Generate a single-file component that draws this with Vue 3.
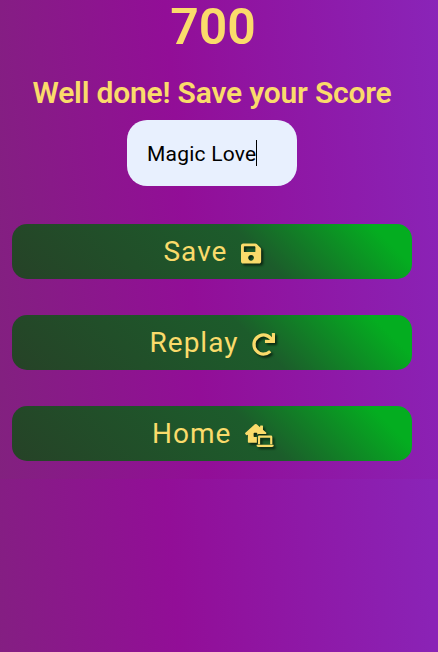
<script setup>
import { ref } from 'vue'

const name = ref('Magic Love')
const actions = [
  {
    label: 'Save', key: 'save', box: '0 0 448 512',
    d: 'M433.941 129.941l-83.882-83.882A48 48 0 0 0 316.118 32H48C21.49 32 0 53.49 0 80v352c0 26.51 21.49 48 48 48h352c26.51 0 48-21.49 48-48V163.882a48 48 0 0 0-14.059-33.941zM224 416c-35.346 0-64-28.654-64-64 0-35.346 28.654-64 64-64s64 28.654 64 64c0 35.346-28.654 64-64 64zm96-304.52V212c0 6.627-5.373 12-12 12H76c-6.627 0-12-5.373-12-12V108c0-6.627 5.373-12 12-12h228.52c3.183 0 6.235 1.264 8.485 3.515l3.48 3.48A11.996 11.996 0 0 1 320 111.48z'
  },
  {
    label: 'Replay', key: 'replay', box: '0 0 512 512',
    d: 'M500.33 0h-47.41a12 12 0 0 0-12 12.57l4 82.76A247.42 247.42 0 0 0 256 8C119.34 8 7.9 119.53 8 256.19 8.1 393.07 119.1 504 256 504a247.1 247.1 0 0 0 166.18-63.91 12 12 0 0 0 .48-17.43l-34-34a12 12 0 0 0-16.38-.55A176 176 0 1 1 402.1 157.8l-101.53-4.87a12 12 0 0 0-12.57 12v47.41a12 12 0 0 0 12 12h200.33a12 12 0 0 0 12-12V12a12 12 0 0 0-12-12z'
  },
  {
    label: 'Home', key: 'home', box: '0 0 640 512',
    d: 'M219 8Q240 -8 261 8L336 72V44Q336 32 348 32H388Q400 32 400 44V130L470 190Q484 208 464 224H304Q288 224 272 240V208Q272 192 256 192H208Q192 192 192 208V272Q192 288 208 288H264V416H80Q64 416 64 400V240L50 247Q36 254 26 243L6 220Q-5 207 9 193ZM288 448V288Q288 256 320 256H576Q608 256 608 288V448H560V304H336V448ZM264 464H632Q640 464 640 472Q640 512 600 512H296Q256 512 256 472Q256 464 264 464Z'
  }
]
</script>

<template>
  <main class="page">
    <div class="score">700</div>
    <h1 class="title">Well done! Save your Score</h1>
    <div class="field"><span class="value">{{ name }}</span><span class="caret"></span></div>
    <div class="actions">
      <button v-for="a in actions" :key="a.key" class="btn" :class="a.key">
        <span class="label">{{ a.label }}</span>
        <svg class="icon" :viewBox="a.box"><path fill-rule="evenodd" :d="a.d" /></svg>
      </button>
    </div>
  </main>
</template>

<style>
body {
  background: linear-gradient(85deg, #82217f 0%, #920e97 43%, #8a24b8 100%) 0 0 / 100% 479px repeat;
  height: 652px;
  overflow: hidden;
}
</style>

<style scoped>
.page {
  width: 424px;
  display: flex;
  flex-direction: column;
  align-items: center;
  font-family: Roboto, sans-serif;
  color: #fadb6b;
}
.score {
  height: 54px;
  line-height: 54px;
  font-size: 50px;
  font-weight: 600;
  margin-left: 2px;
}
.title {
  margin: 18px 0 0;
  height: 40px;
  line-height: 41px;
  font-size: 30px;
  font-weight: 600;
  letter-spacing: -0.2px;
  white-space: nowrap;
}
.field {
  box-sizing: border-box;
  width: 170px;
  height: 66px;
  margin-top: 8px;
  padding-left: 20px;
  display: flex;
  align-items: center;
  border-radius: 20px;
  background: #e8f0fe;
  color: #000;
  font-size: 21px;
}
.value {
  padding-top: 2px;
  letter-spacing: 0.23px;
  white-space: nowrap;
}
.caret {
  width: 1px;
  height: 26px;
  background: #000;
}
.actions {
  width: 400px;
  margin-top: 38px;
  display: grid;
  gap: 36px;
}
.btn {
  height: 55px;
  border: 0;
  padding: 0 0 0 1px;
  border-radius: 15px;
  background: linear-gradient(45deg, #264227 0%, #1c5c2b 60%, #04ad20 91%);
  display: flex;
  align-items: center;
  justify-content: center;
  gap: 14px;
  font-family: inherit;
  font-size: 28px;
  color: inherit;
}
.btn.home {
  padding-left: 2px;
}
.label {
  padding-top: 1px;
  line-height: 54px;
  letter-spacing: 1px;
}
.icon {
  height: 23px;
  margin-top: 4px;
  fill: currentColor;
  overflow: visible;
  filter: drop-shadow(2px 2px 1px rgba(0, 0, 0, 0.6));
}
</style>
